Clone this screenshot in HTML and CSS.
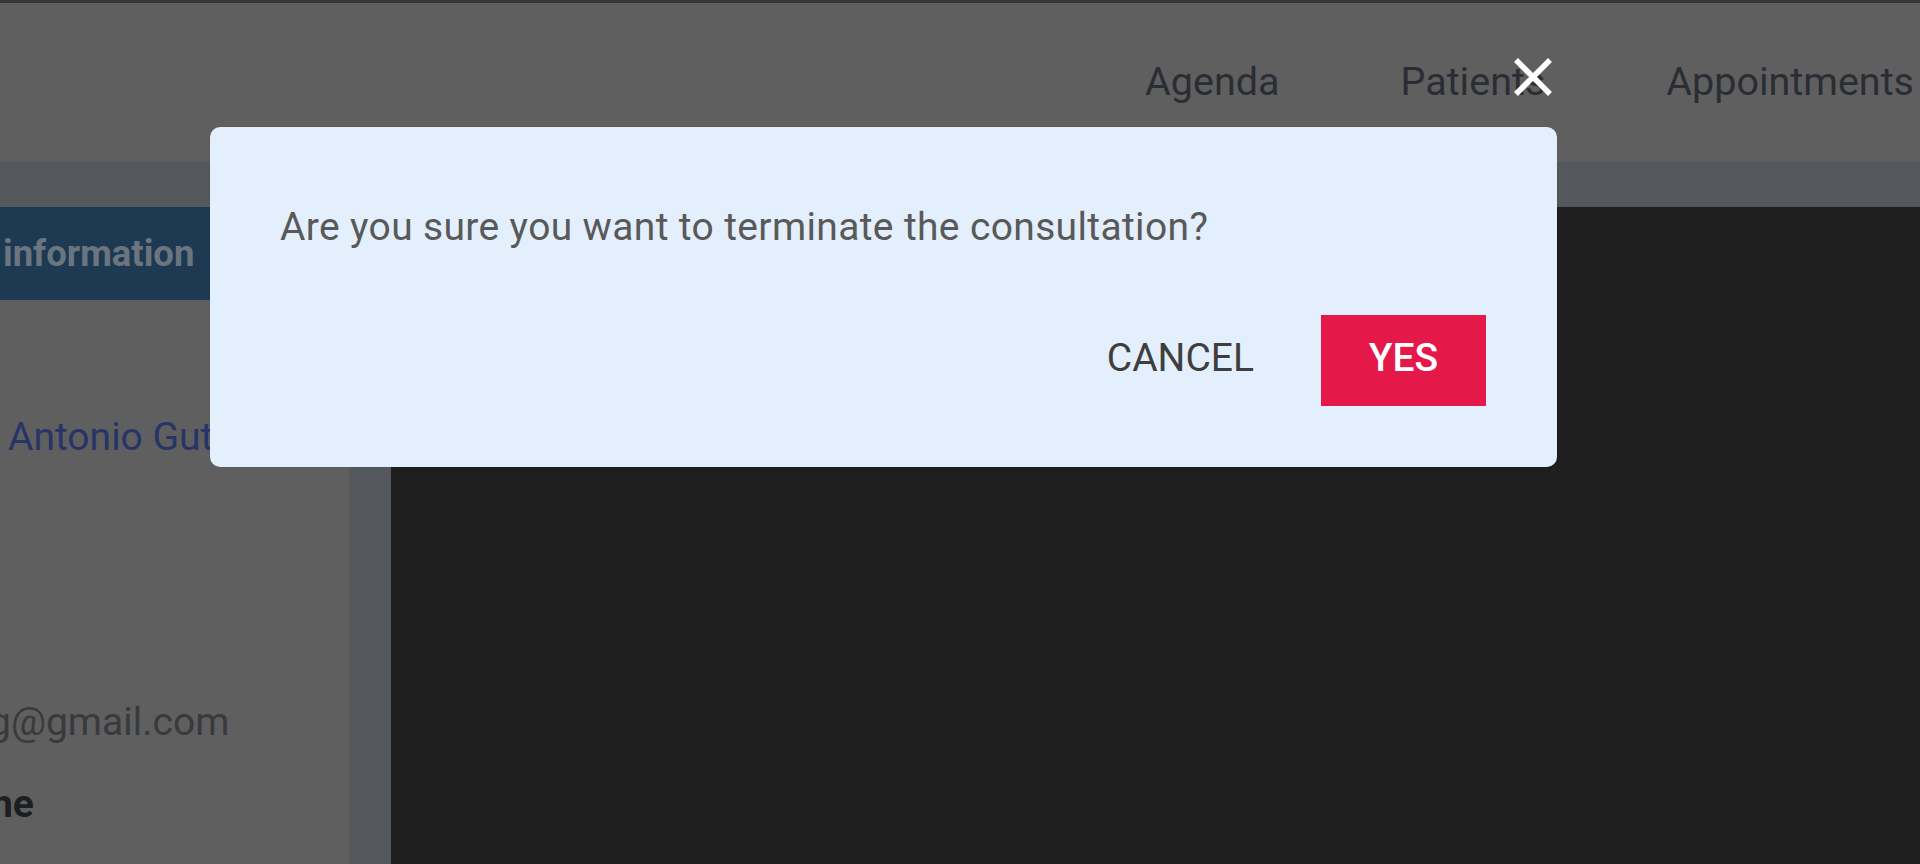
FILE: index.html
```html
<!DOCTYPE html>
<html lang="en">
<head>
<meta charset="utf-8">
<title>Consultation</title>
<link rel="stylesheet" href="styles.css">
</head>
<body>
<div class="page">
  <div class="topline"></div>
  <header class="header">
    <nav class="nav">
      <a class="nav-item">Agenda</a>
      <a class="nav-item">Patients</a>
      <a class="nav-item">Appointments</a>
    </nav>
  </header>
  <div class="subbar"></div>
  <main class="main">
    <aside class="side">
      <div class="tab">information</div>
      <div class="name">Antonio Gutiérrez</div>
      <div class="email">g@gmail.com</div>
      <div class="label">ne</div>
    </aside>
    <div class="gutter"></div>
    <section class="viewer"></section>
  </main>
</div>

<button class="close" aria-label="Close">
  <svg width="42" height="40" viewBox="0 0 42 40"><path d="M4 3 L38 37 M38 3 L4 37" stroke="#ffffff" stroke-width="5.5" stroke-linecap="butt"/></svg>
</button>

<div class="dialog" role="dialog">
  <p class="dialog-text">Are you sure you want to terminate the consultation?</p>
  <div class="dialog-actions">
    <button class="btn btn-cancel">CANCEL</button>
    <button class="btn btn-yes">YES</button>
  </div>
</div>
</body>
</html>
```

FILE: styles.css
```css
* { box-sizing: border-box; }

html, body {
  margin: 0;
  padding: 0;
  width: 1920px;
  height: 864px;
  overflow: hidden;
  background: #54575b;
  font-family: Roboto, "Liberation Sans", sans-serif;
}

.page {
  display: flex;
  flex-direction: column;
  height: 864px;
}

.topline {
  height: 3px;
  background: #363636;
  flex: none;
}

.header {
  height: 159px;
  flex: none;
  background: #5f5f5f;
  display: flex;
  justify-content: flex-end;
  align-items: flex-start;
  padding: 56px 6px 0 0;
}

.nav {
  display: flex;
  gap: 121px;
}

.nav-item {
  font-size: 39.5px;
  line-height: 46px;
  color: #2a2d33;
}

.subbar {
  height: 45px;
  flex: none;
  background: #54575b;
}

.main {
  flex: 1;
  display: flex;
  min-height: 0;
}

.side {
  width: 349px;
  flex: none;
  background: #5f5f5f;
  overflow: hidden;
  display: flex;
  flex-direction: column;
  white-space: nowrap;
}

.tab {
  height: 93px;
  flex: none;
  background: #1e3a52;
  display: flex;
  align-items: center;
  padding-left: 3px;
  font-size: 36.5px;
  font-weight: 700;
  line-height: 42px;
  color: #6b7580;
}

.name {
  margin-top: 114px;
  padding-left: 8px;
  font-size: 39px;
  line-height: 46px;
  color: #283466;
}

.email {
  margin-top: 239px;
  margin-left: -11px;
  font-size: 39px;
  line-height: 46px;
  color: #383a3d;
}

.label {
  margin-top: 36px;
  margin-left: -9px;
  font-size: 39px;
  font-weight: 700;
  line-height: 46px;
  color: #1d1e20;
}

.gutter {
  width: 42px;
  flex: none;
  background: #54575b;
}

.viewer {
  flex: 1;
  background: #1e1e1e;
}

.close {
  position: absolute;
  left: 1512px;
  top: 57px;
  width: 42px;
  height: 40px;
  padding: 0;
  border: 0;
  background: transparent;
  display: block;
}
.close svg { display: block; }

.dialog {
  position: absolute;
  left: 210px;
  top: 127px;
  width: 1347px;
  height: 340px;
  background: #e3effc;
  border-radius: 10px;
  box-shadow: 0 0 1px rgba(0,0,0,0.35);
  padding: 77px 71px 0 70px;
  display: flex;
  flex-direction: column;
}

.dialog-text {
  margin: 0;
  font-size: 39px;
  line-height: 46px;
  letter-spacing: 0.35px;
  color: #595959;
}

.dialog-actions {
  margin-top: 65px;
  display: flex;
  justify-content: flex-end;
  align-items: flex-start;
  gap: 47px;
}

.btn {
  font-family: Roboto, "Liberation Sans", sans-serif;
  font-size: 39px;
  line-height: 46px;
  border: 0;
  border-radius: 0;
  padding: 20px 20px 25px;
  height: 91px;
  cursor: pointer;
}

.btn-cancel {
  background: transparent;
  color: #3e3e40;
  font-weight: 400;
}

.btn-yes {
  width: 165px;
  padding-left: 0;
  padding-right: 0;
  background: #e5184a;
  color: #ffffff;
  font-weight: 500;
  text-align: center;
}
```
